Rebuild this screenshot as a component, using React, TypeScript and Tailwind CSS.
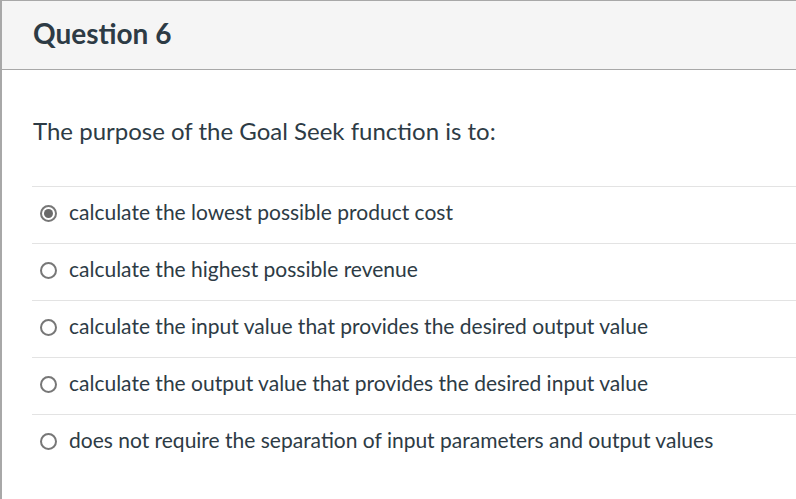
import React from "react";

const answers = [
  "calculate the lowest possible product cost",
  "calculate the highest possible revenue",
  "calculate the input value that provides the desired output value",
  "calculate the output value that provides the desired input value",
  "does not require the separation of input parameters and output values",
];

export default function App() {
  return (
    <div
      className="w-[796px] h-[499px] overflow-hidden bg-white text-[#2d3b45] border-l-2 border-t border-[#a8a8a8]"
      style={{ fontFamily: "Lato, 'Open Sans', sans-serif" }}
    >
      <div className="h-[69px] bg-[#f5f5f5] border-b border-[#a8a8a8] flex items-center pl-[31px]">
        <h2 className="text-[28px] font-bold leading-none pb-[5px]">Question 6</h2>
      </div>
      <div className="pl-[30px]">
        <div className="h-[116px] flex items-center pl-[1px] pt-[6px]">
          <p className="text-[24px] leading-none">The purpose of the Goal Seek function is to:</p>
        </div>
        <div>
          {answers.map((a, i) => (
            <div
              key={i}
              className="h-[57px] border-t border-[#e3e3e3] flex items-center pl-[8px] gap-[12px] pb-[5px]"
            >
              <span className="w-[17px] h-[17px] rounded-full border-2 border-[#777] flex items-center justify-center shrink-0 mt-[1px]">
                {i === 0 && <span className="w-[9px] h-[9px] rounded-full bg-[#6a6a6a]" />}
              </span>
              <span className="text-[21px] leading-none pb-[2px]">{a}</span>
            </div>
          ))}
        </div>
      </div>
    </div>
  );
}
